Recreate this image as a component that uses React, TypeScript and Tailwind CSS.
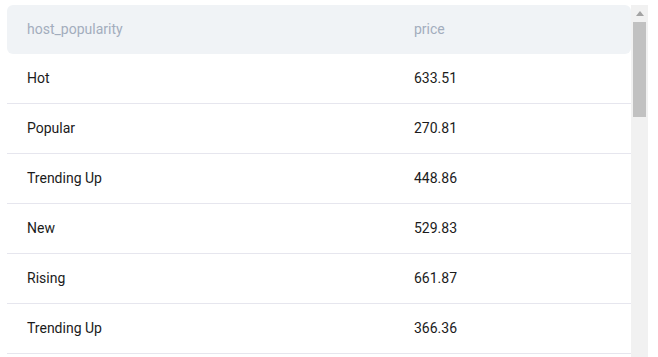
const rows = [
  { popularity: "Hot", price: "633.51" },
  { popularity: "Popular", price: "270.81" },
  { popularity: "Trending Up", price: "448.86" },
  { popularity: "New", price: "529.83" },
  { popularity: "Rising", price: "661.87" },
  { popularity: "Trending Up", price: "366.36" },
  { popularity: "Hot", price: "512.04" },
];

export default function App() {
  return (
    <div className="h-[357px] w-[658px] overflow-hidden bg-white pl-[7px] pt-[5px] font-['Roboto',sans-serif] text-[14px]">
      <div className="flex h-[352px]">
        <div className="w-[624px] overflow-hidden">
          <div className="flex h-[49px] items-center rounded-[6px] bg-[#f0f3f6] text-[#a3adbd]">
            <div className="w-[387px] pl-5">host_popularity</div>
            <div className="pl-5">price</div>
          </div>
          {rows.map((r, i) => (
            <div
              key={i}
              className="flex h-[50px] items-center border-b border-[#e6e6ee] text-[#1b1b1b]"
            >
              <div className="w-[387px] pl-5">{r.popularity}</div>
              <div className="pl-5">{r.price}</div>
            </div>
          ))}
        </div>
        <div className="flex w-[17px] flex-col bg-[#f1f1f1]">
          <div className="flex h-[17px] items-center justify-center">
            <svg width="8" height="5" viewBox="0 0 8 5" aria-hidden>
              <path d="M4 0L8 5H0z" fill="#a3a3a3" />
            </svg>
          </div>
          <div className="mx-[2px] h-[95px] bg-[#c1c1c1]" />
        </div>
      </div>
    </div>
  );
}
